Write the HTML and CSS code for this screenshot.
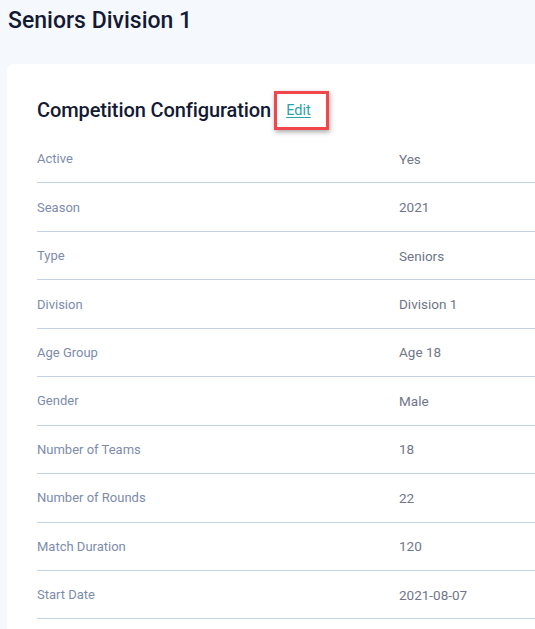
FILE: index.html
```html
<!DOCTYPE html>
<html>
<head>
<meta charset="utf-8">
<link rel="stylesheet" href="styles.css">
</head>
<body>
<h1 class="page-title">Seniors Division 1</h1>
<div class="card">
  <div class="card-head">
    <h2 class="card-title">Competition Configuration</h2>
    <span class="highlight"><a class="edit-link" href="#">Edit</a></span>
  </div>
  <div class="rows">
    <div class="row"><div class="label">Active</div><div class="value">Yes</div></div>
    <div class="row"><div class="label">Season</div><div class="value">2021</div></div>
    <div class="row"><div class="label">Type</div><div class="value">Seniors</div></div>
    <div class="row"><div class="label">Division</div><div class="value">Division 1</div></div>
    <div class="row"><div class="label">Age Group</div><div class="value">Age 18</div></div>
    <div class="row"><div class="label">Gender</div><div class="value">Male</div></div>
    <div class="row"><div class="label">Number of Teams</div><div class="value">18</div></div>
    <div class="row"><div class="label">Number of Rounds</div><div class="value">22</div></div>
    <div class="row"><div class="label">Match Duration</div><div class="value">120</div></div>
    <div class="row"><div class="label">Start Date</div><div class="value">2021-08-07</div></div>
  </div>
</div>
</body>
</html>
```
FILE: styles.css
```css
html, body {
  margin: 0;
  padding: 0;
}
body {
  background: #f5f8fc;
  font-family: Roboto, "Liberation Sans", sans-serif;
  overflow: hidden;
  width: 535px;
  height: 629px;
}
.page-title {
  margin: 0;
  padding: 6px 0 0 8px;
  font-size: 23px;
  line-height: 29px;
  font-weight: 500;
  color: #141a33;
  letter-spacing: 0;
}
.card {
  margin: 29px 0 0 7px;
  width: 528px;
  height: 565px;
  background: #ffffff;
  border-radius: 7px 0 0 0;
  padding: 25px 0 0 30px;
  box-sizing: border-box;
  overflow: hidden;
}
.card-head {
  display: flex;
  align-items: center;
  height: 42px;
}
.card-title {
  margin: 0;
  font-size: 20px;
  font-weight: 500;
  color: #141a33;
  letter-spacing: -0.1px;
}
.highlight {
  display: inline-flex;
  align-items: center;
  margin-left: 3px;
  width: 55px;
  height: 39px;
  box-sizing: border-box;
  border: 3px solid #f2474a;
  box-shadow: 1px 2px 5px rgba(0,0,0,0.35);
  padding-left: 9px;
}
.edit-link {
  color: #2aa3a8;
  font-size: 14.5px;
  text-decoration: underline;
  text-underline-offset: 2px;
}
.rows {
  margin-top: 4px;
}
.row {
  display: flex;
  align-items: center;
  height: 47.44px;
  border-bottom: 1px solid #c4d3e2;
  font-size: 13px;
}
.label {
  width: 362px;
  flex: none;
  color: #7d8cab;
  font-weight: 400;
}
.value {
  color: #70768a;
  font-size: 13.5px;
}
```
